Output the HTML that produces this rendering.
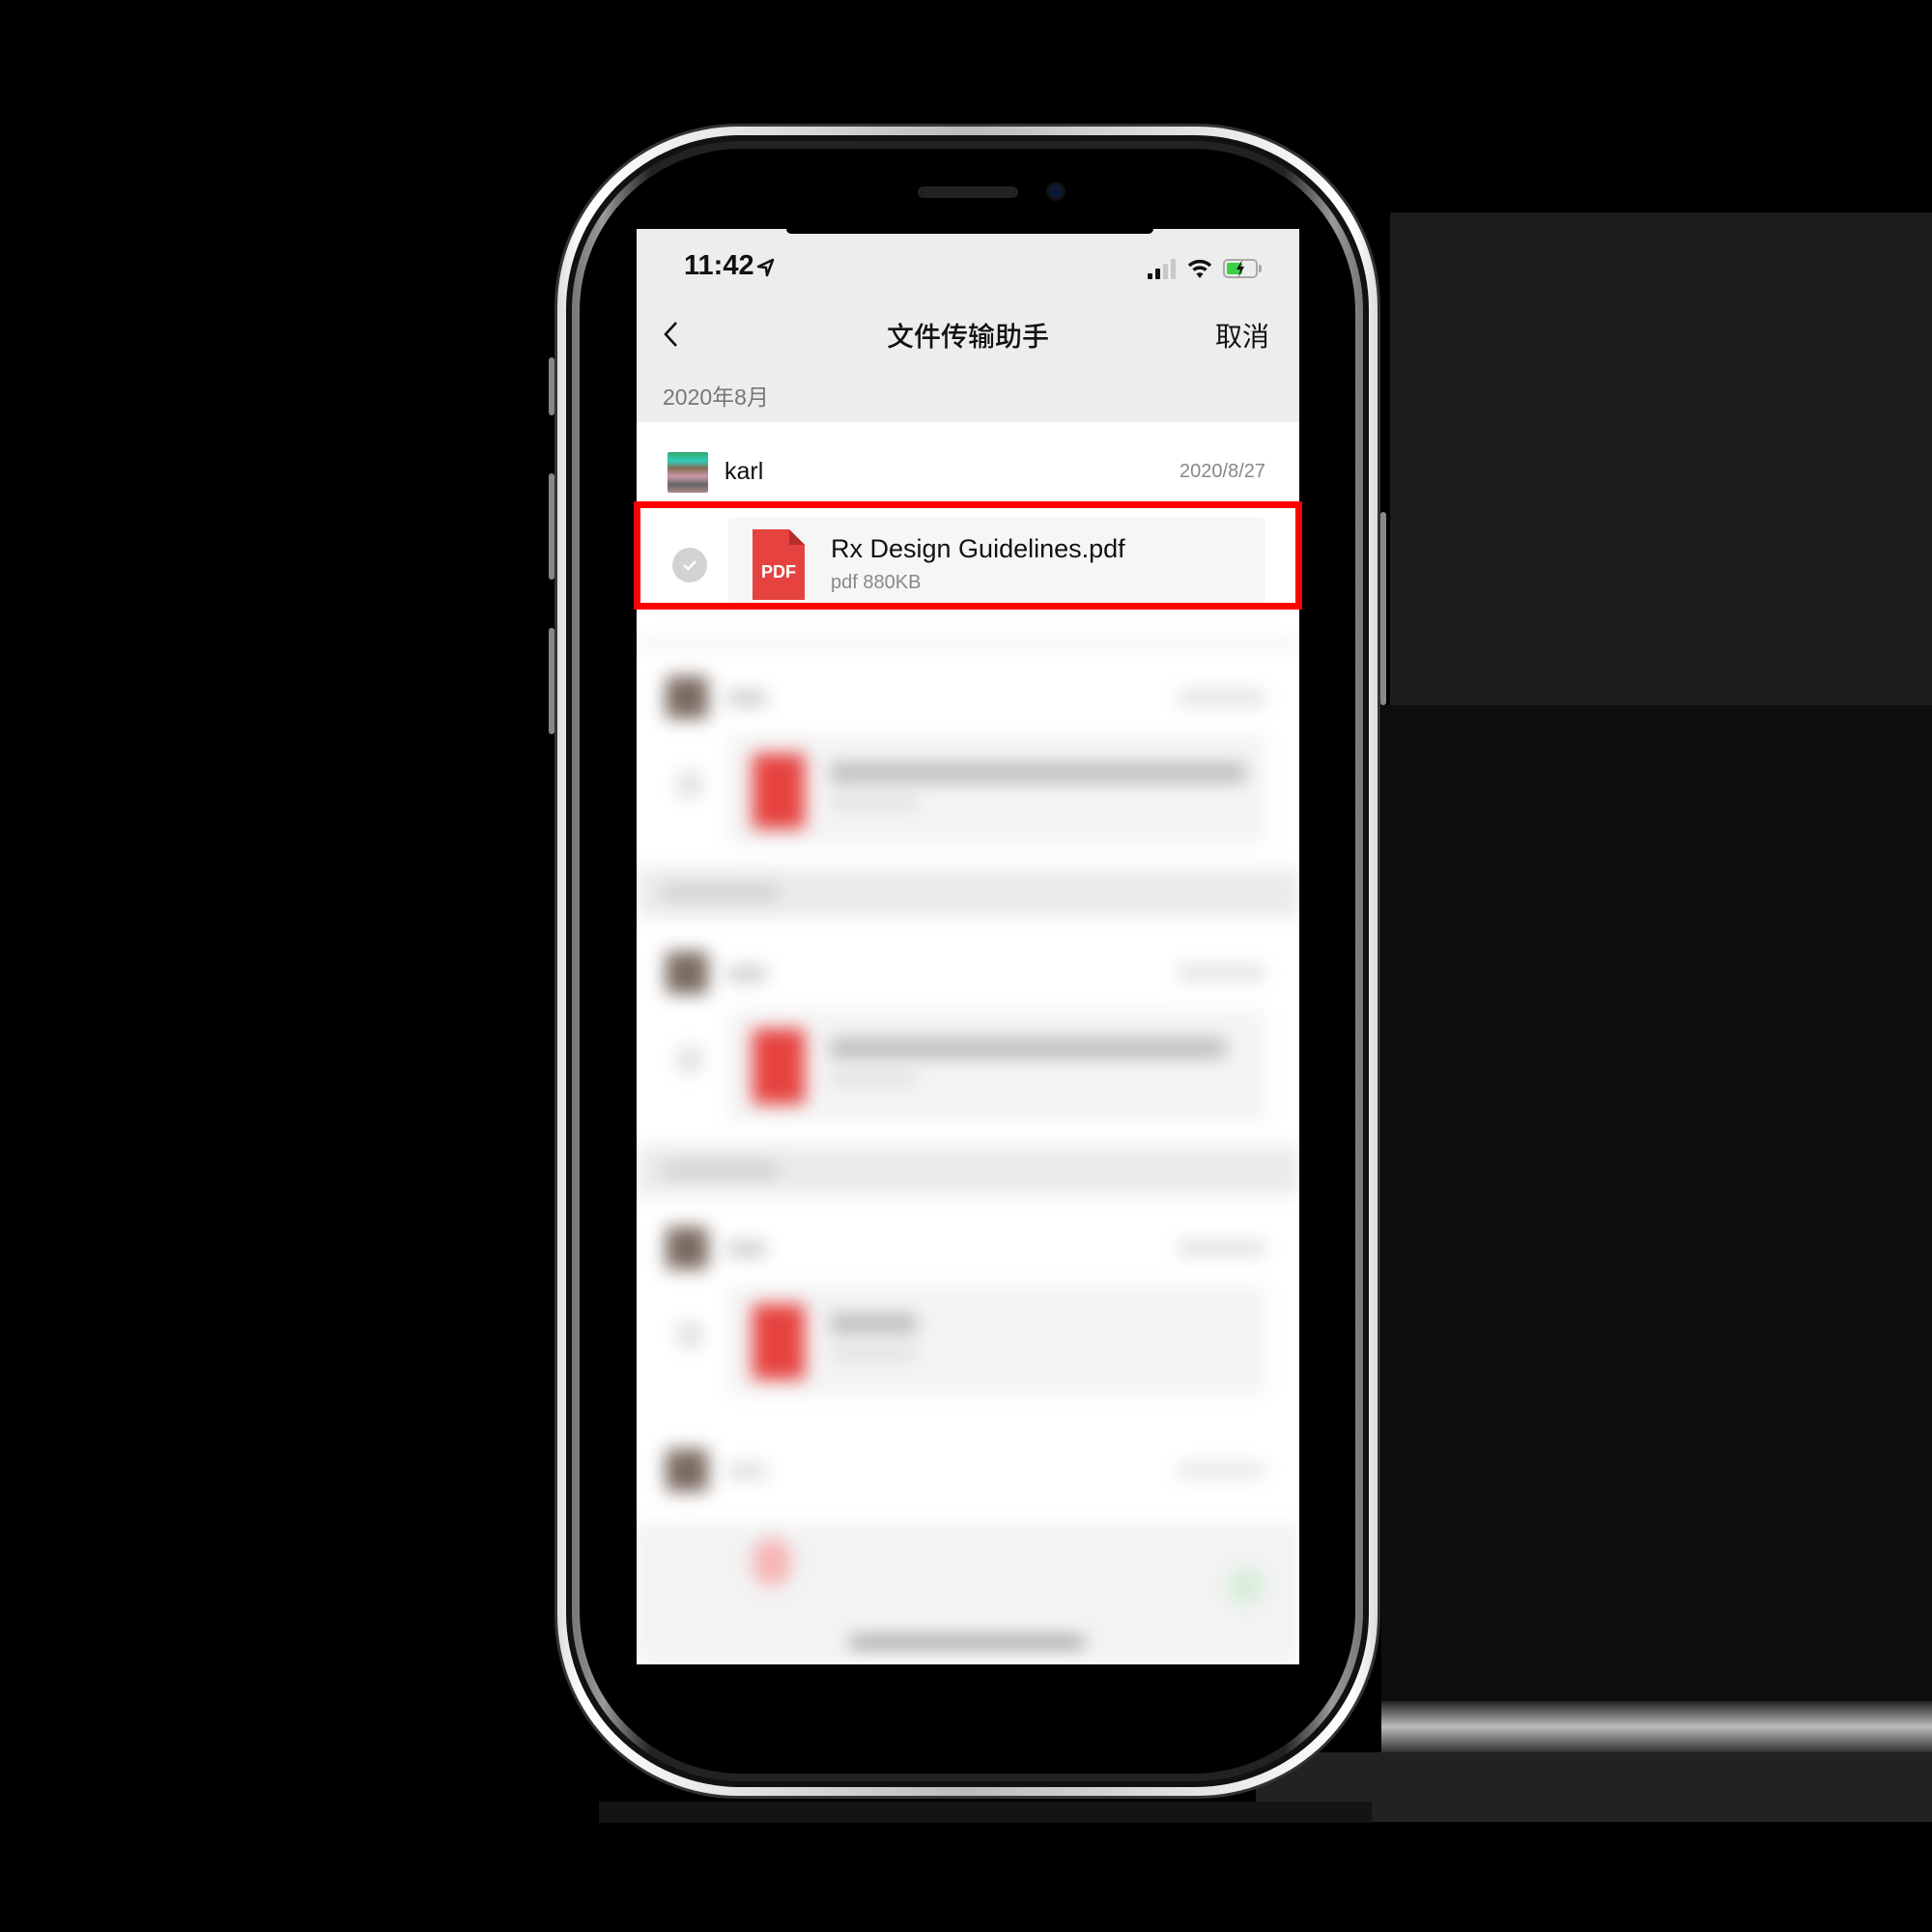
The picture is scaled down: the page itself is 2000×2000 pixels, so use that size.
<!DOCTYPE html>
<html><head><meta charset="utf-8"><style>
*{margin:0;padding:0;box-sizing:border-box}
body{width:2000px;height:2000px;background:#000;position:relative;overflow:hidden;font-family:"Liberation Sans","Noto Sans CJK SC",sans-serif}
.a{position:absolute}
</style></head><body>
<div class="a" style="left:1439px;top:220px;width:561px;height:510px;background:#1d1d1d"></div>
<div class="a" style="left:1430px;top:730px;width:570px;height:1031px;background:#0e0e0e"></div>
<div class="a" style="left:1430px;top:1761px;width:570px;height:53px;background:linear-gradient(#222,#bbb 50%,#333)"></div>
<div class="a" style="left:1300px;top:1814px;width:700px;height:72px;background:#222"></div>
<div class="a" style="left:620px;top:1865px;width:800px;height:22px;background:#141414"></div>

<div class="a" style="left:574px;top:128px;width:855px;height:1734px;border-radius:190px;background:#333"></div>
<div class="a" style="left:577px;top:131px;width:849px;height:1728px;border-radius:187px;background:linear-gradient(90deg,#ddd,#fff 3%,#bbb 50%,#fff 97%,#ddd)"></div>
<div class="a" style="left:586px;top:140px;width:831px;height:1710px;border-radius:180px;background:#111"></div>
<div class="a" style="left:592px;top:146px;width:819px;height:1698px;border-radius:175px;background:linear-gradient(90deg,#777,#999 4%,#222 10%,#222 90%,#999 96%,#777)"></div>
<div class="a" style="left:600px;top:154px;width:803px;height:1682px;border-radius:168px;background:#000"></div>
<div class="a" style="left:568px;top:370px;width:6px;height:60px;background:#888;border-radius:3px"></div>
<div class="a" style="left:568px;top:490px;width:6px;height:110px;background:#888;border-radius:3px"></div>
<div class="a" style="left:568px;top:650px;width:6px;height:110px;background:#888;border-radius:3px"></div>
<div class="a" style="left:1429px;top:530px;width:6px;height:200px;background:#888;border-radius:3px"></div>

<div class="a" style="left:950px;top:193px;width:104px;height:12px;border-radius:6px;background:#222"></div>
<div class="a" style="left:1083px;top:188px;width:20px;height:20px;border-radius:50%;background:#0b1a33;border:3px solid #111"></div>

<div class="a" style="left:659px;top:237px;width:686px;height:1486px;background:#fff;overflow:hidden">
  <div class="a" style="left:0;top:0;width:686px;height:200px;background:#ededed"></div>
  <div class="a" style="left:155px;top:0;width:380px;height:5px;background:#000;border-radius:0 0 14px 14px"></div>
  <div class="a" style="left:49px;top:22px;font-size:29px;font-weight:bold;color:#111">11:42</div>
  <svg class="a" style="left:124px;top:30px" width="20" height="20" viewBox="0 0 20 20"><path d="M17 2 L2 9 L10 10 L11 18 Z" fill="none" stroke="#111" stroke-width="2.5" stroke-linejoin="round"/></svg>
  <div class="a" style="left:529px;top:46px;width:5px;height:6px;background:#111;border-radius:1px"></div>
  <div class="a" style="left:537px;top:41px;width:5px;height:11px;background:#111;border-radius:1px"></div>
  <div class="a" style="left:545px;top:36px;width:5px;height:16px;background:#c8c8c8;border-radius:1px"></div>
  <div class="a" style="left:553px;top:31px;width:5px;height:21px;background:#c8c8c8;border-radius:1px"></div>
  <svg class="a" style="left:570px;top:30px" width="26" height="22" viewBox="0 0 26 22"><path d="M2 8 A16 16 0 0 1 24 8" fill="none" stroke="#111" stroke-width="3.5"/><path d="M6.5 12.5 A10 10 0 0 1 19.5 12.5" fill="none" stroke="#111" stroke-width="3.5"/><path d="M13 21 L9.5 16.5 A5 5 0 0 1 16.5 16.5 Z" fill="#111"/></svg>
  <div class="a" style="left:607px;top:31px;width:36px;height:20px;border:2px solid #aaa;border-radius:5px;padding:2px"><div style="width:16px;height:12px;background:#3bd146;border-radius:2px"></div></div>
  <div class="a" style="left:644px;top:37px;width:3px;height:8px;background:#aaa;border-radius:0 2px 2px 0"></div>
  <svg class="a" style="left:618px;top:31px" width="14" height="20" viewBox="0 0 14 20"><path d="M9 1 L3 11 L7 11 L5 19 L11 8 L7 8 Z" fill="#111"/></svg>
  <svg class="a" style="left:26px;top:94px" width="20" height="30" viewBox="0 0 20 30"><path d="M15 3 L4 15 L15 27" fill="none" stroke="#111" stroke-width="2.6"/></svg>
  <div class="a" style="left:0;width:686px;top:90px;text-align:center;font-size:28px;color:#111;font-weight:500">文件传输助手</div>
  <div class="a" style="right:31px;top:90px;font-size:28px;color:#111">取消</div>
  <div class="a" style="left:27px;top:155px;font-size:23px;color:#777">2020年8月</div>
  <div class="a" style="left:32px;top:231px;width:42px;height:42px;background:linear-gradient(180deg,#3a6 0,#3cb 22%,#8a6a55 40%,#c9a 60%,#666 80%,#a88);border-radius:2px"></div>
  <div class="a" style="left:91px;top:237px;font-size:25px;color:#111">karl</div>
  <div class="a" style="right:35px;top:240px;font-size:20px;color:#888">2020/8/27</div>
  <div class="a" style="left:95px;top:299px;width:556px;height:89px;background:#f6f6f6;border-radius:4px"></div>
  <div class="a" style="left:37px;top:330px;width:36px;height:36px;border-radius:50%;background:#d2d2d2"></div>
  <svg class="a" style="left:45px;top:338px" width="20" height="20" viewBox="0 0 20 20"><path d="M4 10 L8.5 14 L16 6" fill="none" stroke="#fff" stroke-width="2.5"/></svg>
  <svg class="a" style="left:120px;top:311px" width="54" height="73" viewBox="0 0 54 73"><path d="M0 0 H38 L54 16 V73 H0 Z" fill="#e64340"/><path d="M38 0 L54 16 H38 Z" fill="#b32d2b"/><text x="27" y="50" font-family="Liberation Sans" font-weight="bold" font-size="18" fill="#fff" text-anchor="middle">PDF</text></svg>
  <div class="a" style="left:201px;top:316px;font-size:27px;color:#111">Rx Design Guidelines.pdf</div>
  <div class="a" style="left:201px;top:355px;font-size:20px;color:#888">pdf 880KB</div>

  <div class="a" style="left:0;top:410px;width:686px;height:1076px;filter:blur(9px)">
    <div class="a" style="left:0;top:0;width:686px;height:1076px;background:#fff"></div>
    <div class="a" style="left:0;top:15px;width:686px;height:8px;background:#eee"></div>

    <div class="a" style="left:30px;top:53px;width:44px;height:44px;background:#7a6a60;border-radius:4px"></div>
    <div class="a" style="left:94px;top:68px;width:40px;height:16px;background:#ccc"></div>
    <div class="a" style="left:560px;top:68px;width:90px;height:14px;background:#ddd"></div>
    <div class="a" style="left:95px;top:113px;width:556px;height:115px;background:#f4f4f4"></div>
    <div class="a" style="left:40px;top:150px;width:30px;height:30px;border-radius:50%;background:#e2e2e2"></div>
    <div class="a" style="left:120px;top:133px;width:54px;height:78px;background:#e64340"></div>
    <div class="a" style="left:200px;top:143px;width:430px;height:20px;background:#bbb"></div>
    <div class="a" style="left:200px;top:178px;width:90px;height:12px;background:#ddd"></div>

    <div class="a" style="left:0;top:252px;width:686px;height:51px;background:#ebebeb"></div>
    <div class="a" style="left:27px;top:270px;width:120px;height:14px;background:#ccc"></div>

    <div class="a" style="left:30px;top:338px;width:44px;height:44px;background:#7a6a60;border-radius:4px"></div>
    <div class="a" style="left:94px;top:353px;width:40px;height:16px;background:#ccc"></div>
    <div class="a" style="left:560px;top:353px;width:90px;height:14px;background:#ddd"></div>
    <div class="a" style="left:95px;top:398px;width:556px;height:115px;background:#f4f4f4"></div>
    <div class="a" style="left:40px;top:435px;width:30px;height:30px;border-radius:50%;background:#e2e2e2"></div>
    <div class="a" style="left:120px;top:418px;width:54px;height:78px;background:#e64340"></div>
    <div class="a" style="left:200px;top:428px;width:410px;height:20px;background:#bbb"></div>
    <div class="a" style="left:200px;top:463px;width:90px;height:12px;background:#ddd"></div>

    <div class="a" style="left:0;top:539px;width:686px;height:51px;background:#ebebeb"></div>
    <div class="a" style="left:27px;top:557px;width:120px;height:14px;background:#ccc"></div>

    <div class="a" style="left:30px;top:623px;width:44px;height:44px;background:#7a6a60;border-radius:4px"></div>
    <div class="a" style="left:94px;top:638px;width:40px;height:16px;background:#ccc"></div>
    <div class="a" style="left:560px;top:638px;width:90px;height:14px;background:#ddd"></div>
    <div class="a" style="left:95px;top:683px;width:556px;height:115px;background:#f4f4f4"></div>
    <div class="a" style="left:40px;top:720px;width:30px;height:30px;border-radius:50%;background:#e2e2e2"></div>
    <div class="a" style="left:120px;top:703px;width:54px;height:78px;background:#e64340"></div>
    <div class="a" style="left:200px;top:713px;width:90px;height:20px;background:#bbb"></div>
    <div class="a" style="left:200px;top:748px;width:90px;height:12px;background:#ddd"></div>

    <div class="a" style="left:30px;top:853px;width:44px;height:44px;background:#7a6a60;border-radius:4px"></div>
    <div class="a" style="left:94px;top:868px;width:40px;height:16px;background:#ddd"></div>
    <div class="a" style="left:560px;top:868px;width:90px;height:14px;background:#e4e4e4"></div>
    <div class="a" style="left:0;top:930px;width:686px;height:146px;background:#f3f3f3"></div>
    <div class="a" style="left:120px;top:945px;width:40px;height:50px;background:#f6b5b5;border-radius:20px"></div>
    <div class="a" style="left:610px;top:975px;width:40px;height:40px;background:#d8eedb;border-radius:20px"></div>
    <div class="a" style="left:220px;top:1048px;width:244px;height:10px;background:#888;border-radius:5px"></div>
  </div>
</div>
<!-- red highlight box -->
<div class="a" style="left:656px;top:519px;width:692px;height:112px;border:7px solid #ff0000"></div>
</body></html>
